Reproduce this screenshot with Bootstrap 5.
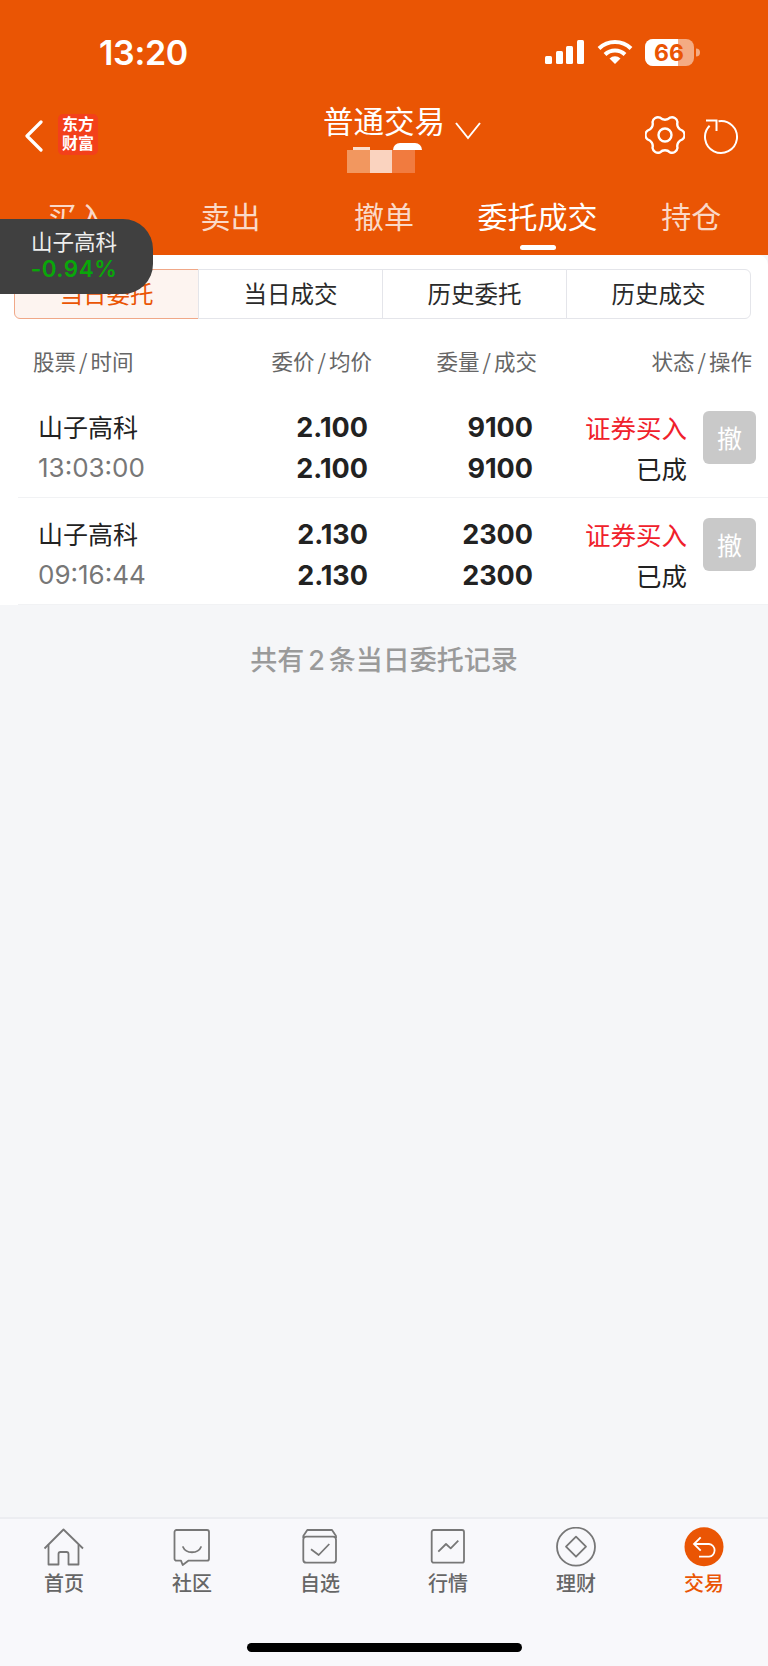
<!DOCTYPE html>
<html lang="zh-CN">
<head>
    <meta charset="UTF-8">
    <meta name="viewport" content="width=device-width, initial-scale=1.0">
    <title>普通交易</title>
    <link href="https://cdn.jsdelivr.net/npm/bootstrap@5.3.0/dist/css/bootstrap.min.css" rel="stylesheet">
    <style>
        body { font-family: "Noto Sans CJK SC", sans-serif; background: #f5f6f8; color: #222; width: 768px; height: 1666px; overflow: hidden; }
        .app-shell { height: 1666px; position: relative; }
        .num { font-family: Inter, "Noto Sans CJK SC", sans-serif; }

        .top-orange { background: #ea5504; height: 255px; color: #fff; flex: none; }
        .status-row { height: 104px; padding: 0 67px 0 99px; }
        .status-icons { gap: 12px; }
        .clock { font-size: 34px; font-weight: 600; letter-spacing: -.3px; }
        .nav-row { height: 80px; padding: 10px 29px 0 25px; position: relative; }
        .back-arrow { margin-top: 6px; }
        .brand-logo { width: 40px; height: 41px; background: #f3401a; border-radius: 5px; margin-left: 15px; font-family: "Liberation Serif", "Noto Sans CJK SC", serif; font-size: 16px; font-weight: 700; line-height: 19px; text-align: center; padding-top: 1px; }
        .title-box { position: absolute; left: 323px; top: 0; }
        .title-text { font-size: 30.5px; line-height: 32px; }
        .title-chevron { margin: 18px 0 0 10px; }
        .mask-strip { margin: 10px 0 0 24px; position: relative; }
        .mask-strip i { display: block; width: 22.5px; height: 23px; }
        .mask-cap { position: absolute; left: 46px; top: -7px; width: 29px; height: 7px; background: #fff; border-radius: 10px 10px 0 0; }
        .mask-bit { position: absolute; left: 6px; top: -3px; width: 17px; height: 3px; background: rgba(255,255,255,.8); }
        .m-a { background: #f2975f; }
        .m-b { background: #fad3bf; }
        .m-c { background: #f17b3f; }
        .tool-icons { gap: 19px; margin-top: 1px; }
        .tab-cell { font-size: 30px; line-height: 40px; color: rgba(255,255,255,.78); text-align: center; width: 153.6px; padding-top: 11px; position: relative; height: 71px; }
        .tab-cell.on { color: #fff; }
        .tab-cell.on::after { content: ""; position: absolute; left: 59px; bottom: 5px; width: 36px; height: 5px; background: #fff; border-radius: 3px; }

        .white-panel { background: #fff; height: 350px; border-radius: 10px 10px 0 0; flex: none; padding-top: 14px; }
        .seg-group { margin: 0 17px 0 14px; width: 737px; height: 50px; }
        .seg-group .seg-item { flex: 1 1 0; border: 1px solid #e4e5ea; background: #fff; color: #2a2a2a; font-size: 23.5px; line-height: 1; padding: 0; border-radius: 0; display: flex; align-items: center; justify-content: center; margin-left: -1px; }
        .seg-group .seg-item:first-child { border-radius: 6px 0 0 6px; margin-left: 0; background: #fdf4f0; border-color: #f0a888; color: #ea5504; }
        .seg-group .seg-item:last-child { border-radius: 0 6px 6px 0; }

        .head-row { height: 84px; font-size: 21.5px; color: #666; }
        .h-a { width: 33px; }
        .h-name { width: 170px; }
        .h-price { width: 169px; text-align: right; }
        .h-qty { width: 165px; text-align: right; }
        .h-stat { width: 215px; text-align: right; }
        .slash { margin: 0 3px; }

        .rows-wrap { margin-top: -12px; }
        .order-row { height: 107px; margin-left: 18px; padding: 15px 0 0 20px; border-bottom: 1px solid #f1f2f4; }
        .cell-line { line-height: 41px; }
        .c-name { width: 162px; font-size: 25px; }
        .c-name .tm { color: #777; font-family: Inter, sans-serif; font-size: 26px; }
        .c-price { width: 168px; padding-top: 1px; text-align: right; font-family: Inter, sans-serif; font-weight: 700; font-size: 27px; }
        .c-qty { width: 165px; padding-top: 1px; text-align: right; font-family: Inter, sans-serif; font-weight: 700; font-size: 27px; }
        .c-stat { width: 154px; text-align: right; font-size: 25.5px; }
        .c-stat .buy { color: #f0212b; }
        .undo-btn { width: 53px; height: 53px; margin: 5px 0 0 16px; padding: 0; border: 0; background: #c9c9c9; color: #fff; font-size: 25px; border-radius: 6px; }

        .count-note { font-size: 27px; color: #9a9a9a; text-align: center; font-weight: 500; height: 110px; padding-top: 35px; line-height: 38px; flex: none; }
        .count-note .num { margin: 0 4px; }

        .tab-bar { margin-top: auto; height: 149px; flex: none; background: #f8f8fb; border-top: 2px solid #ecedf1; padding-top: 8px; position: relative; }
        .tab-item { width: 128px; text-align: center; font-size: 20px; font-weight: 500; line-height: 26px; color: #666; }
        .tab-item svg { display: block; margin: 0 auto 3px; }
        .tab-item.on { color: #ea5504; }
        .home-bar { position: absolute; left: 247px; top: 124px; width: 275px; height: 9px; background: #000; border-radius: 5px; }

        .float-pill { position: absolute; left: 0; top: 219px; width: 153px; height: 75px; background: #404040; border-radius: 0 30px 30px 0; color: #fff; text-align: center; padding-right: 5px; }
        .float-pill .nm { font-size: 21.5px; line-height: 26px; padding-top: 9px; color: #eee; }
        .float-pill .pc { font-family: Inter, sans-serif; font-size: 22.5px; line-height: 30px; color: #09a709; font-weight: 600; letter-spacing: .5px; }
    </style>
</head>
<body>
<div class="app-shell d-flex flex-column">
    <div class="top-orange">
        <div class="status-row d-flex align-items-center justify-content-between">
            <span class="clock num">13:20</span>
            <div class="status-icons d-flex align-items-center">
                <svg width="40" height="26" viewBox="0 0 40 26" fill="#fff"><rect x="0" y="17" width="7" height="8" rx="1.5"/><rect x="11" y="12" width="7" height="13" rx="1.5"/><rect x="21" y="7" width="7" height="18" rx="1.5"/><rect x="32" y="1" width="7" height="24" rx="1.5"/></svg>
                <svg width="36" height="26" viewBox="0 0 36 26" fill="none" stroke="#fff" stroke-width="4"><path d="M2 9.500a23 23 0 0 1 32 0"/><path d="M8 15.500a14.500 14.500 0 0 1 20 0"/><path d="M18 25l-5.500-5.500a8 8 0 0 1 11 0z" fill="#fff" stroke="none"/></svg>
                <svg width="56" height="27" viewBox="0 0 56 27"><rect x="0" y="0" width="49" height="27" rx="8" fill="#f4ab83"/><path d="M8 0h25v27H8a8 8 0 0 1-8-8V8a8 8 0 0 1 8-8z" fill="#fff"/><path d="M51 9.500a4 4 0 0 1 0 8z" fill="#f4ab83"/><text x="24" y="22" text-anchor="middle" font-family="Inter, sans-serif" font-size="23" font-weight="700" fill="#ea5504">66</text></svg>
            </div>
        </div>
        <div class="nav-row d-flex align-items-start">
            <svg class="back-arrow" width="18" height="32" viewBox="0 0 18 32" fill="none" stroke="#fff" stroke-width="3.200" stroke-linecap="round" stroke-linejoin="round"><path d="M16 2 2 16l14 14"/></svg>
            <div class="brand-logo">东方<br>财富</div>
            <div class="title-box">
                <div class="d-flex align-items-start">
                    <span class="title-text">普通交易</span>
                    <svg class="title-chevron" width="26" height="18" viewBox="0 0 26 18" fill="none" stroke="#fff" stroke-width="2"><path d="M1 1l12 15L25 1"/></svg>
                </div>
                <div class="mask-strip d-flex">
                    <span class="mask-cap"></span>
                    <span class="mask-bit"></span>
                    <i class="m-a"></i><i class="m-b"></i><i class="m-c"></i>
                </div>
            </div>
            <div class="tool-icons ms-auto d-flex align-items-start">
                <svg width="40" height="40" viewBox="0 0 40 40" fill="none" stroke="#fff" stroke-width="2.400" stroke-linejoin="round"><path d="M37.470 15.650A5.500 5.500 0 0 1 37.470 24.350A7 7 0 0 0 32.500 32.950A5.500 5.500 0 0 1 24.960 37.300A7 7 0 0 0 15.040 37.300A5.500 5.500 0 0 1 7.500 32.950A7 7 0 0 0 2.530 24.350A5.500 5.500 0 0 1 2.530 15.650A7 7 0 0 0 7.500 7.050A5.500 5.500 0 0 1 15.040 2.700A7 7 0 0 0 24.960 2.700A5.500 5.500 0 0 1 32.500 7.050A7 7 0 0 0 37.470 15.650Z"/><circle cx="20" cy="20" r="6.500"/></svg>
                <svg class="mt-1" width="35" height="36" viewBox="0 0 35 36" fill="none" stroke="#fff" stroke-width="2"><path d="M14.500 2.200A16 16 0 1 1 5.600 6.800"/><path d="M2 1.500h10.500V12"/></svg>
            </div>
        </div>
        <div class="d-flex">
            <div class="tab-cell">买入</div>
            <div class="tab-cell">卖出</div>
            <div class="tab-cell">撤单</div>
            <div class="tab-cell on">委托成交</div>
            <div class="tab-cell">持仓</div>
        </div>
    </div>

    <div class="white-panel">
        <div class="seg-group d-flex">
            <button class="btn seg-item" type="button">当日委托</button>
            <button class="btn seg-item" type="button">当日成交</button>
            <button class="btn seg-item" type="button">历史委托</button>
            <button class="btn seg-item" type="button">历史成交</button>
        </div>
        <div class="head-row d-flex align-items-center">
            <div class="h-a"></div>
            <div class="h-name">股票<span class="slash">/</span>时间</div>
            <div class="h-price">委价<span class="slash">/</span>均价</div>
            <div class="h-qty">委量<span class="slash">/</span>成交</div>
            <div class="h-stat">状态<span class="slash">/</span>操作</div>
        </div>
        <div class="rows-wrap">
            <div class="order-row d-flex">
                <div class="c-name"><div class="cell-line">山子高科</div><div class="cell-line tm">13:03:00</div></div>
                <div class="c-price"><div class="cell-line">2.100</div><div class="cell-line">2.100</div></div>
                <div class="c-qty"><div class="cell-line">9100</div><div class="cell-line">9100</div></div>
                <div class="c-stat"><div class="cell-line buy">证券买入</div><div class="cell-line">已成</div></div>
                <button class="undo-btn" type="button">撤</button>
            </div>
            <div class="order-row d-flex">
                <div class="c-name"><div class="cell-line">山子高科</div><div class="cell-line tm">09:16:44</div></div>
                <div class="c-price"><div class="cell-line">2.130</div><div class="cell-line">2.130</div></div>
                <div class="c-qty"><div class="cell-line">2300</div><div class="cell-line">2300</div></div>
                <div class="c-stat"><div class="cell-line buy">证券买入</div><div class="cell-line">已成</div></div>
                <button class="undo-btn" type="button">撤</button>
            </div>
        </div>
    </div>

    <div class="count-note">共有<span class="num">2</span>条当日委托记录</div>

    <div class="tab-bar d-flex align-items-start">
        <div class="tab-item">
            <svg width="42" height="40" viewBox="0 0 42 40" fill="none" stroke="#777" stroke-width="1.800" stroke-linejoin="round"><path d="M1.500 21.500 20.500 2.500 40 21.500"/><path d="M5.500 17.500V37.500H15.500V27a2 2 0 0 1 2-2h6a2 2 0 0 1 2 2V37.500H35.500V17.500"/></svg>
            首页
        </div>
        <div class="tab-item">
            <svg width="42" height="40" viewBox="0 0 42 40" fill="none" stroke="#777" stroke-width="1.800" stroke-linejoin="round"><path d="M5.500 3H36a2 2 0 0 1 2 2V31.700a2 2 0 0 1-2 2H17.300L11.700 38 10 33.700H5.500a2 2 0 0 1-2-2V5a2 2 0 0 1 2-2z"/><path d="M12 20c3 7 15 7 18 0" stroke-linecap="round"/></svg>
            社区
        </div>
        <div class="tab-item">
            <svg width="42" height="40" viewBox="0 0 42 40" fill="none" stroke="#777" stroke-width="1.800" stroke-linejoin="round"><rect x="4.300" y="9.700" width="32.700" height="26" rx="3"/><path d="M4.300 11V9l4-6h24.700l4 6v2"/><path d="M12 22.300l7.700 5.700L30.300 17"/></svg>
            自选
        </div>
        <div class="tab-item">
            <svg width="42" height="40" viewBox="0 0 42 40" fill="none" stroke="#777" stroke-width="1.800" stroke-linejoin="round"><rect x="4.700" y="3" width="32.300" height="32.700" rx="2"/><path d="M11.300 24.700 19 17l4.700 4.300 7.600-7.600"/></svg>
            行情
        </div>
        <div class="tab-item">
            <svg width="42" height="40" viewBox="0 0 42 40" fill="none" stroke="#777" stroke-width="1.800" stroke-linejoin="round"><circle cx="21" cy="19.700" r="19"/><path d="M21 9.700l10 10-10 10-10-10z"/></svg>
            理财
        </div>
        <div class="tab-item on">
            <svg width="42" height="40" viewBox="0 0 42 40"><circle cx="21" cy="19.700" r="19.500" fill="#ea5504"/><path d="M17.700 10.300 11 17l6.700 6.700M11 17h15a6.400 6.400 0 0 1 0 12.700H16" fill="none" stroke="#fff" stroke-width="1.800"/></svg>
            交易
        </div>
        <span class="home-bar"></span>
    </div>

    <div class="float-pill">
        <div class="nm">山子高科</div>
        <div class="pc">-0.94%</div>
    </div>
</div>
<script src="https://cdn.jsdelivr.net/npm/bootstrap@5.3.0/dist/js/bootstrap.bundle.min.js"></script>
</body>
</html>
